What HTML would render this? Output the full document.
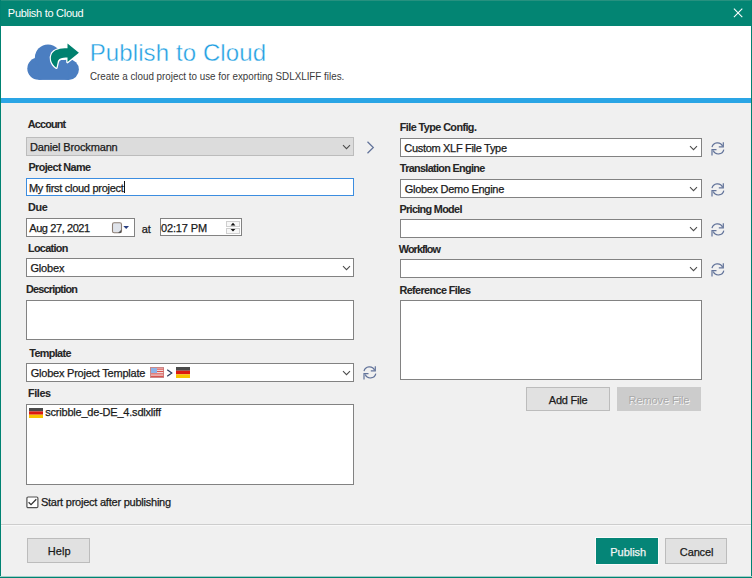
<!DOCTYPE html>
<html><head><meta charset="utf-8">
<style>
*{box-sizing:border-box;margin:0;padding:0}
html,body{width:752px;height:578px;overflow:hidden;background:#f0f0f0;font-family:"Liberation Sans",sans-serif;color:#1a1a1a}
.a{position:absolute}
.t{position:absolute;white-space:nowrap;line-height:16px}
.bl{display:inline-block;width:0;height:0;vertical-align:baseline}
.box{position:absolute;background:#fff;border:1px solid #828282}
.btn{position:absolute;background:#e1e1e1;border:1px solid #bcbcbc}
.ref{position:absolute}


</style></head><body>
<!-- window frame -->
<div class="a" style="left:0;top:0;width:752px;height:26px;background:#038573"></div>
<div class="a" style="left:0;top:0;width:752px;height:1px;background:#27917f"></div>
<svg class="a" style="left:733px;top:8px" width="10" height="10" viewBox="0 0 10 10"><path d="M0.9 0.6L9.3 9.2M9.3 0.6L0.9 9.2" stroke="#fff" stroke-width="1.05"/></svg>
<div class="a" style="left:1px;top:26px;width:750px;height:72px;background:#fff"></div>
<div class="a" style="left:1px;top:98px;width:750px;height:5px;background:#2aa5e5"></div>
<div class="a" style="left:0;top:0;width:1px;height:578px;background:#008272"></div>
<div class="a" style="left:751px;top:0;width:1px;height:578px;background:#008272"></div>
<div class="a" style="left:0;top:576px;width:752px;height:1px;background:#9fd0c8"></div>
<div class="a" style="left:0;top:577px;width:752px;height:1px;background:#008272"></div>

<!-- header icon -->
<svg class="a" style="left:24px;top:38px" width="60" height="46" viewBox="0 0 60 46">
  <g fill="#4b7ec1">
    <circle cx="14.5" cy="30.6" r="11.2"/>
    <circle cx="24" cy="19.6" r="13.1"/>
    <circle cx="44.6" cy="31.6" r="10.3"/>
    <rect x="14.5" y="22" width="30" height="19.9"/>
  </g>
  <path d="M43.5 5.4 L54.9 14.8 L43.5 24 L43.5 19.6 C38 19.6 34 20.5 33.6 24.5 L32.4 29.8 C27 26 25.6 20 28 15.5 C30.5 11.5 36 10.2 43.5 10.2 Z" fill="#fff" stroke="#fff" stroke-width="2.6" stroke-linejoin="round"/>
  <path d="M43.5 5.4 L54.9 14.8 L43.5 24 L43.5 19.6 C38 19.6 34 20.5 33.6 24.5 L32.4 29.8 C27 26 25.6 20 28 15.5 C30.5 11.5 36 10.2 43.5 10.2 Z" fill="#00816f"/>
</svg>

<!-- left column -->
<div class="a" style="left:26px;top:137px;width:328px;height:19px;background:#dcdcdc;border:1px solid #bcbcbc"></div>
<svg class="a" style="left:342px;top:144px" width="9" height="6" viewBox="0 0 9 6"><path d="M1 1.2L4.5 4.7L8 1.2" fill="none" stroke="#4c4c4c" stroke-width="1.05"/></svg>
<svg class="a" style="left:366px;top:141px" width="9" height="13" viewBox="0 0 9 13"><path d="M1.5 0.8L7.3 6.5L1.5 12.2" fill="none" stroke="#62739a" stroke-width="1.25"/></svg>

<div class="box" style="left:26px;top:178px;width:328px;height:18px;border-color:#3c8de0"></div>
<div class="a" style="left:124px;top:181px;width:1px;height:12px;background:#111"></div>

<div class="box" style="left:26px;top:218px;width:109px;height:19px"></div>
<svg class="a" style="left:111px;top:222px" width="20" height="12" viewBox="0 0 20 12">
  <rect x="1.5" y="0.8" width="9" height="10" rx="1.6" fill="#dfe3ea" stroke="#8c7e74" stroke-width="1.1"/>
  <path d="M10.5 7.5 L7 11 L10 11 Z" fill="#555"/>
  <path d="M12.3 4 L18 4 L15.2 7 Z" fill="#2a3f80"/>
</svg>
<div class="box" style="left:160px;top:218px;width:82px;height:18px"></div>
<div class="a" style="left:226px;top:221px;width:14px;height:6px;border:1px solid #cfcfcf;background:#f7f7f7"></div>
<div class="a" style="left:226px;top:228px;width:14px;height:6px;border:1px solid #cfcfcf;background:#f7f7f7"></div>
<svg class="a" style="left:226px;top:221px" width="14" height="13" viewBox="0 0 14 13"><path d="M4.6 4.4L7 1.8L9.4 4.4Z M4.6 8.0L9.4 8.0L7 10.6Z" fill="#111"/></svg>

<div class="box" style="left:26px;top:258px;width:328px;height:19px"></div>
<svg class="a" style="left:342px;top:265px" width="9" height="6" viewBox="0 0 9 6"><path d="M1 1.2L4.5 4.7L8 1.2" fill="none" stroke="#4c4c4c" stroke-width="1.05"/></svg>
<div class="box" style="left:26px;top:300px;width:328px;height:40px"></div>
<div class="box" style="left:26px;top:363px;width:328px;height:19px"></div>
<svg class="a" style="left:342px;top:370px" width="9" height="6" viewBox="0 0 9 6"><path d="M1 1.2L4.5 4.7L8 1.2" fill="none" stroke="#4c4c4c" stroke-width="1.05"/></svg>
<!-- US flag -->
<svg class="a" style="left:150px;top:367px" width="14" height="11" viewBox="0 0 14 11">
  <rect x="0.5" y="0.5" width="13" height="10" fill="#f4e8e8" stroke="#c98a8a" stroke-width="1"/>
  <g fill="#d9534f"><rect x="6.5" y="1.5" width="7" height="1.2"/><rect x="6.5" y="3.9" width="7" height="1.2"/><rect x="1" y="6.3" width="12.5" height="1.2"/><rect x="1" y="8.6" width="12.5" height="1.4"/></g>
  <rect x="1" y="1" width="6" height="5" fill="#8fb2e6"/>
</svg>
<svg class="a" style="left:166px;top:369px" width="7" height="8" viewBox="0 0 7 8"><path d="M1.2 0.8L5.8 4L1.2 7.2" fill="none" stroke="#2b3b5c" stroke-width="1.2"/></svg>
<svg class="a" style="left:176px;top:367px" width="14" height="11" viewBox="0 0 14 11">
  <rect x="0" y="0" width="14" height="3.7" fill="#4a4a4a"/>
  <rect x="0" y="3.7" width="14" height="3.6" fill="#dd1a10"/>
  <rect x="0" y="7.3" width="14" height="3.7" fill="#f8c400"/>
</svg>
<svg class="a" style="left:362px;top:365px" width="16" height="16" viewBox="0 0 16 16"><g fill="none" stroke="#62739a" stroke-width="1.2"><path d="M2 6.2 A5.6 5.6 0 0 1 12.6 5.2"/><path d="M13.3 1.2 V5.8 H8.8"/><path d="M13.8 8.6 A5.6 5.6 0 0 1 3.2 9.6"/><path d="M2.0 14.4 V8.6 H6.5"/></g></svg>

<div class="box" style="left:26px;top:404px;width:328px;height:81px"></div>
<svg class="a" style="left:29px;top:408px" width="14" height="10" viewBox="0 0 14 10">
  <rect x="0" y="0" width="14" height="3.4" fill="#4a4a4a"/>
  <rect x="0" y="3.4" width="14" height="3.3" fill="#dd1a10"/>
  <rect x="0" y="6.7" width="14" height="3.3" fill="#f8c400"/>
</svg>
<svg class="a" style="left:26px;top:496px" width="13" height="13" viewBox="0 0 13 13">
  <rect x="0.9" y="1.0" width="11" height="10.6" rx="1.2" fill="#fff" stroke="#505050" stroke-width="1.2"/>
  <path d="M2.6 6.3 L5 8.6 L10.3 3.3" fill="none" stroke="#333" stroke-width="1.3"/>
</svg>

<div class="a" style="left:1px;top:524px;width:750px;height:1px;background:#cdcdcd"></div>
<div class="a" style="left:1px;top:525px;width:750px;height:1px;background:#f8f8f8"></div>
<div class="btn" style="left:27px;top:538px;width:63px;height:25px"></div>
<div class="a" style="left:595px;top:537px;width:64px;height:28px;background:#058577;border:1px solid #fafafa"></div>
<div class="btn" style="left:665px;top:538px;width:62px;height:26px"></div>

<!-- right column -->
<div class="box" style="left:400px;top:138px;width:302px;height:19px"></div>
<div class="box" style="left:400px;top:179px;width:302px;height:19px"></div>
<div class="box" style="left:400px;top:219px;width:302px;height:19px"></div>
<div class="box" style="left:400px;top:259px;width:302px;height:19px"></div>
<svg class="a" style="left:689px;top:145px" width="9" height="6" viewBox="0 0 9 6"><path d="M1 1.2L4.5 4.7L8 1.2" fill="none" stroke="#4c4c4c" stroke-width="1.05"/></svg>
<svg class="a" style="left:689px;top:186px" width="9" height="6" viewBox="0 0 9 6"><path d="M1 1.2L4.5 4.7L8 1.2" fill="none" stroke="#4c4c4c" stroke-width="1.05"/></svg>
<svg class="a" style="left:689px;top:226px" width="9" height="6" viewBox="0 0 9 6"><path d="M1 1.2L4.5 4.7L8 1.2" fill="none" stroke="#4c4c4c" stroke-width="1.05"/></svg>
<svg class="a" style="left:689px;top:266px" width="9" height="6" viewBox="0 0 9 6"><path d="M1 1.2L4.5 4.7L8 1.2" fill="none" stroke="#4c4c4c" stroke-width="1.05"/></svg>
<svg class="a" style="left:710px;top:141px" width="16" height="16" viewBox="0 0 16 16"><g fill="none" stroke="#62739a" stroke-width="1.2"><path d="M2 6.2 A5.6 5.6 0 0 1 12.6 5.2"/><path d="M13.3 1.2 V5.8 H8.8"/><path d="M13.8 8.6 A5.6 5.6 0 0 1 3.2 9.6"/><path d="M2.0 14.4 V8.6 H6.5"/></g></svg>
<svg class="a" style="left:710px;top:182px" width="16" height="16" viewBox="0 0 16 16"><g fill="none" stroke="#62739a" stroke-width="1.2"><path d="M2 6.2 A5.6 5.6 0 0 1 12.6 5.2"/><path d="M13.3 1.2 V5.8 H8.8"/><path d="M13.8 8.6 A5.6 5.6 0 0 1 3.2 9.6"/><path d="M2.0 14.4 V8.6 H6.5"/></g></svg>
<svg class="a" style="left:710px;top:222px" width="16" height="16" viewBox="0 0 16 16"><g fill="none" stroke="#62739a" stroke-width="1.2"><path d="M2 6.2 A5.6 5.6 0 0 1 12.6 5.2"/><path d="M13.3 1.2 V5.8 H8.8"/><path d="M13.8 8.6 A5.6 5.6 0 0 1 3.2 9.6"/><path d="M2.0 14.4 V8.6 H6.5"/></g></svg>
<svg class="a" style="left:710px;top:262px" width="16" height="16" viewBox="0 0 16 16"><g fill="none" stroke="#62739a" stroke-width="1.2"><path d="M2 6.2 A5.6 5.6 0 0 1 12.6 5.2"/><path d="M13.3 1.2 V5.8 H8.8"/><path d="M13.8 8.6 A5.6 5.6 0 0 1 3.2 9.6"/><path d="M2.0 14.4 V8.6 H6.5"/></g></svg>
<div class="box" style="left:400px;top:300px;width:302px;height:80px"></div>
<div class="btn" style="left:526px;top:387px;width:84px;height:24px"></div>
<div class="a" style="left:617px;top:387px;width:84px;height:24px;background:#cccccc"></div>

<div id="t_tb" class="t" style="left:7.84px;top:5.00px;font-size:11px;font-weight:normal;color:#ffffff;letter-spacing:-0.284px;">Publish to Cloud<i class="bl"></i></div>
<div id="t_hdr" class="t" style="-webkit-text-stroke:0.4px #fff;paint-order:normal;left:89.70px;top:44.60px;font-size:24px;font-weight:normal;color:#22a0e2;letter-spacing:0.106px;">Publish to Cloud<i class="bl"></i></div>
<div id="t_sub" class="t" style="left:90.00px;top:68.21px;font-size:11.2px;font-weight:normal;color:#3a3a3a;letter-spacing:0.000px;transform:scaleX(0.8775);transform-origin:0 0;">Create a cloud project to use for exporting SDLXLIFF files.<i class="bl"></i></div>
<div id="t_acc" class="t" style="-webkit-text-stroke:0.1px currentColor;left:27.84px;top:116.40px;font-size:10.8px;font-weight:bold;color:#262626;letter-spacing:-0.828px;">Account<i class="bl"></i></div>
<div id="t_dan" class="t" style="-webkit-text-stroke:0.25px currentColor;left:29.88px;top:139.40px;font-size:11px;font-weight:normal;color:#1a1a1a;letter-spacing:-0.134px;">Daniel Brockmann<i class="bl"></i></div>
<div id="t_pn" class="t" style="-webkit-text-stroke:0.1px currentColor;left:28.42px;top:159.30px;font-size:10.8px;font-weight:bold;color:#262626;letter-spacing:-0.582px;">Project Name<i class="bl"></i></div>
<div id="t_myf" class="t" style="-webkit-text-stroke:0.25px currentColor;left:28.92px;top:179.50px;font-size:11px;font-weight:normal;color:#1a1a1a;letter-spacing:-0.286px;">My first cloud project<i class="bl"></i></div>
<div id="t_due" class="t" style="-webkit-text-stroke:0.1px currentColor;left:27.96px;top:199.30px;font-size:10.8px;font-weight:bold;color:#262626;letter-spacing:-0.240px;">Due<i class="bl"></i></div>
<div id="t_aug" class="t" style="-webkit-text-stroke:0.25px currentColor;left:29.22px;top:220.00px;font-size:11px;font-weight:normal;color:#1a1a1a;letter-spacing:-0.409px;">Aug 27, 2021<i class="bl"></i></div>
<div id="t_at" class="t" style="-webkit-text-stroke:0.25px currentColor;left:141.80px;top:220.60px;font-size:11px;font-weight:normal;color:#1a1a1a;letter-spacing:-0.160px;">at<i class="bl"></i></div>
<div id="t_tim" class="t" style="-webkit-text-stroke:0.25px currentColor;left:160.92px;top:220.10px;font-size:11px;font-weight:normal;color:#1a1a1a;letter-spacing:-0.114px;">02:17 PM<i class="bl"></i></div>
<div id="t_loc" class="t" style="-webkit-text-stroke:0.1px currentColor;left:27.96px;top:240.00px;font-size:10.8px;font-weight:bold;color:#262626;letter-spacing:-0.649px;">Location<i class="bl"></i></div>
<div id="t_glo" class="t" style="-webkit-text-stroke:0.25px currentColor;left:30.38px;top:260.30px;font-size:11px;font-weight:normal;color:#1a1a1a;letter-spacing:-0.160px;">Globex<i class="bl"></i></div>
<div id="t_des" class="t" style="-webkit-text-stroke:0.1px currentColor;left:25.88px;top:280.60px;font-size:10.8px;font-weight:bold;color:#262626;letter-spacing:-0.736px;">Description<i class="bl"></i></div>
<div id="t_tpl" class="t" style="-webkit-text-stroke:0.1px currentColor;left:29.22px;top:344.50px;font-size:10.8px;font-weight:bold;color:#262626;letter-spacing:-0.620px;">Template<i class="bl"></i></div>
<div id="t_gpt" class="t" style="-webkit-text-stroke:0.25px currentColor;left:30.76px;top:364.80px;font-size:11px;font-weight:normal;color:#1a1a1a;letter-spacing:-0.230px;">Globex Project Template<i class="bl"></i></div>
<div id="t_fil" class="t" style="-webkit-text-stroke:0.1px currentColor;left:27.96px;top:385.00px;font-size:10.8px;font-weight:bold;color:#262626;letter-spacing:-0.360px;">Files<i class="bl"></i></div>
<div id="t_scr" class="t" style="-webkit-text-stroke:0.25px currentColor;left:45.26px;top:404.40px;font-size:11px;font-weight:normal;color:#1a1a1a;letter-spacing:-0.213px;">scribble_de-DE_4.sdlxliff<i class="bl"></i></div>
<div id="t_stp" class="t" style="-webkit-text-stroke:0.25px currentColor;left:40.88px;top:494.21px;font-size:11px;font-weight:normal;color:#1a1a1a;letter-spacing:-0.232px;">Start project after publishing<i class="bl"></i></div>
<div id="t_hlp" class="t" style="-webkit-text-stroke:0.25px currentColor;left:47.84px;top:542.71px;font-size:11px;font-weight:normal;color:#1a1a1a;letter-spacing:0.058px;">Help<i class="bl"></i></div>
<div id="t_pub" class="t" style="-webkit-text-stroke:0.25px currentColor;left:610.26px;top:544.30px;font-size:11px;font-weight:normal;color:#f4f4f4;letter-spacing:-0.029px;">Publish<i class="bl"></i></div>
<div id="t_can" class="t" style="-webkit-text-stroke:0.25px currentColor;left:679.84px;top:544.30px;font-size:11px;font-weight:normal;color:#1a1a1a;letter-spacing:-0.128px;">Cancel<i class="bl"></i></div>
<div id="t_ftc" class="t" style="-webkit-text-stroke:0.1px currentColor;left:399.84px;top:119.40px;font-size:10.8px;font-weight:bold;color:#262626;letter-spacing:-0.570px;">File Type Config.<i class="bl"></i></div>
<div id="t_cx" class="t" style="-webkit-text-stroke:0.25px currentColor;left:404.34px;top:140.00px;font-size:11px;font-weight:normal;color:#1a1a1a;letter-spacing:-0.312px;">Custom XLF File Type<i class="bl"></i></div>
<div id="t_te" class="t" style="-webkit-text-stroke:0.1px currentColor;left:399.80px;top:159.80px;font-size:10.8px;font-weight:bold;color:#262626;letter-spacing:-0.659px;">Translation Engine<i class="bl"></i></div>
<div id="t_gde" class="t" style="-webkit-text-stroke:0.25px currentColor;left:404.76px;top:180.80px;font-size:11px;font-weight:normal;color:#1a1a1a;letter-spacing:-0.296px;">Globex Demo Engine<i class="bl"></i></div>
<div id="t_pm" class="t" style="-webkit-text-stroke:0.1px currentColor;left:399.46px;top:200.50px;font-size:10.8px;font-weight:bold;color:#262626;letter-spacing:-0.655px;">Pricing Model<i class="bl"></i></div>
<div id="t_wf" class="t" style="-webkit-text-stroke:0.1px currentColor;left:398.80px;top:240.71px;font-size:10.8px;font-weight:bold;color:#262626;letter-spacing:-0.895px;">Workflow<i class="bl"></i></div>
<div id="t_rf" class="t" style="-webkit-text-stroke:0.1px currentColor;left:399.46px;top:281.80px;font-size:10.8px;font-weight:bold;color:#262626;letter-spacing:-0.589px;">Reference Files<i class="bl"></i></div>
<div id="t_add" class="t" style="-webkit-text-stroke:0.25px currentColor;left:548.80px;top:391.60px;font-size:11px;font-weight:normal;color:#1a1a1a;letter-spacing:-0.229px;">Add File<i class="bl"></i></div>
<div id="t_rem" class="t" style="text-shadow:0.8px 0.8px 0 #f8f8f8;left:628.54px;top:391.60px;font-size:11px;font-weight:normal;color:#a8a8a8;letter-spacing:-0.080px;">Remove File<i class="bl"></i></div>
</body></html>
